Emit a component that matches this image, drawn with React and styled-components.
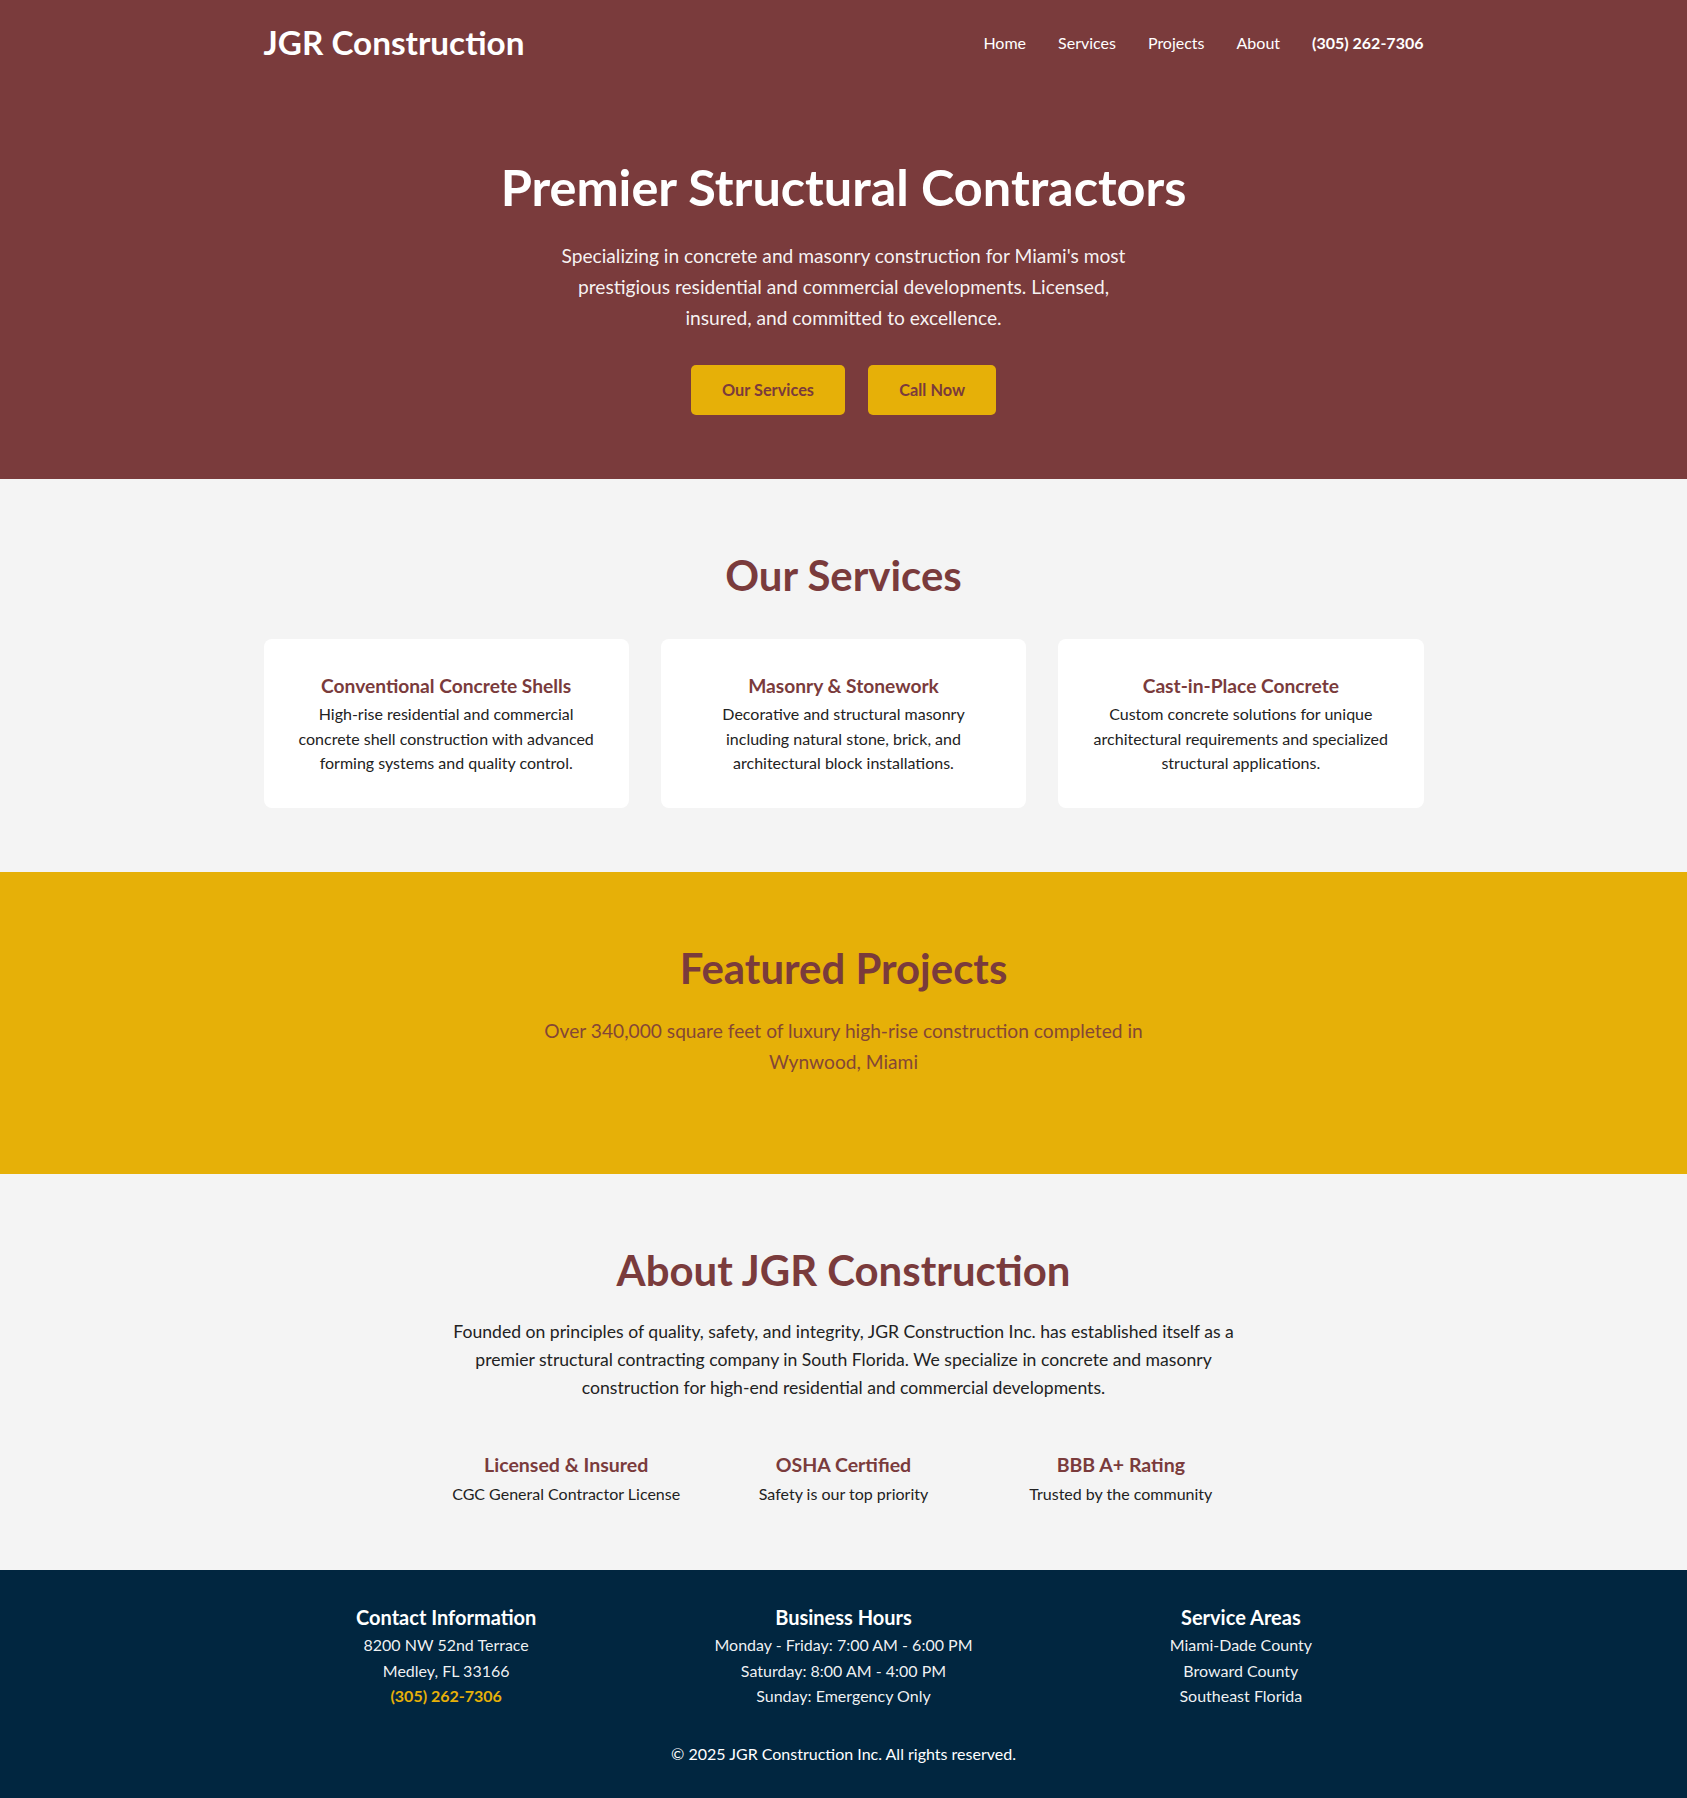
import React from 'react';
import styled, { createGlobalStyle } from 'styled-components';

const maroon = '#7a3b3c';
const gold = '#e6b008';
const navy = '#012640';

const GlobalStyle = createGlobalStyle`
  * { box-sizing: border-box; }
  body {
    margin: 0;
    font-family: "Segoe UI", Lato, "Open Sans", sans-serif;
    line-height: 1.6;
    color: #333;
    background: #f4f4f4;
  }
`;

const Container = styled.div`
  max-width: 1200px;
  margin: 0 auto;
  padding: 0 20px;
`;

const Header = styled.header`
  background: ${maroon};
  color: white;
  padding: 19px 0;
`;

const NavBar = styled(Container)`
  display: flex;
  justify-content: space-between;
  align-items: center;
`;

const Logo = styled.div`
  font-size: 2.08rem;
  line-height: 1.4;
  font-weight: 700;
`;

const NavLinks = styled.nav`
  display: flex;
  gap: 2rem;
  align-items: center;
`;

const NavLink = styled.a`
  color: white;
  text-decoration: none;
  font-size: 1rem;
  font-weight: ${p => (p.$bold ? 700 : 400)};
`;

const Hero = styled.section`
  background: ${maroon};
  color: white;
  text-align: center;
  padding: 4rem 0;
`;

const HeroTitle = styled.h1`
  font-size: 3.15rem;
  line-height: 1.52;
  font-weight: 700;
  margin: 0 0 1rem;
`;

const HeroText = styled.p`
  font-size: 1.2rem;
  max-width: 600px;
  margin: 0 auto 2rem;
  color: rgba(255, 255, 255, 0.95);
`;

const ButtonRow = styled.div`
  display: flex;
  justify-content: center;
  gap: 1.45rem;
`;

const Button = styled.a`
  display: inline-block;
  background: ${gold};
  color: ${maroon};
  font-weight: 700;
  font-size: 1.02rem;
  line-height: 1.2;
  padding: 15px 31px;
  border-radius: 5px;
  text-decoration: none;
`;

const Section = styled.section`
  background: ${p => p.$bg || '#f4f4f4'};
  padding: 4rem 0;
  text-align: center;
`;

const SectionTitle = styled.h2`
  font-size: 2.62rem;
  line-height: 1.53;
  font-weight: 700;
  color: ${maroon};
  margin: 0 0 ${p => p.$gap || '2rem'};
`;

const Grid = styled.div`
  display: grid;
  grid-template-columns: repeat(3, 1fr);
  gap: 2rem;
`;

const Card = styled.div`
  background: white;
  border-radius: 8px;
  padding: 2rem;
`;

const CardTitle = styled.h3`
  font-size: 1.2rem;
  color: ${maroon};
  margin: 0;
`;

const CardText = styled.p`
  margin: 0;
  line-height: 1.55;
  color: #222;
`;

const ProjectsText = styled.p`
  font-size: 1.2rem;
  max-width: 600px;
  margin: 0 auto 2rem;
  color: ${maroon};
  opacity: 0.9;
`;

const AboutText = styled.p`
  font-size: 1.1rem;
  max-width: 800px;
  margin: 0 auto 3rem;
  color: #222;
`;

const Features = styled(Grid)`
  max-width: 800px;
  margin: 0 auto;
`;

const FeatureTitle = styled.h3`
  font-size: 1.22rem;
  line-height: 1.55;
  color: ${maroon};
  margin: 0;
`;

const FeatureText = styled.p`
  margin: 0;
  font-size: 1rem;
  color: #222;
`;

const Footer = styled.footer`
  background: ${navy};
  color: white;
  text-align: center;
  padding: 2rem 0;
`;

const FooterTitle = styled.h4`
  font-size: 1.25rem;
  line-height: 1.5;
  margin: 0;
`;

const FooterLine = styled.p`
  margin: 0;
  font-size: 1rem;
  color: ${p => (p.$accent ? gold : 'rgba(255,255,255,0.95)')};
  font-weight: ${p => (p.$accent ? 700 : 400)};
`;

const Copyright = styled.p`
  margin: 2rem 0 0;
  font-size: 1rem;
`;

const services = [
  {
    title: 'Conventional Concrete Shells',
    text: 'High-rise residential and commercial concrete shell construction with advanced forming systems and quality control.',
  },
  {
    title: 'Masonry & Stonework',
    text: 'Decorative and structural masonry including natural stone, brick, and architectural block installations.',
  },
  {
    title: 'Cast-in-Place Concrete',
    text: 'Custom concrete solutions for unique architectural requirements and specialized structural applications.',
  },
];

const features = [
  { title: 'Licensed & Insured', text: 'CGC General Contractor License' },
  { title: 'OSHA Certified', text: 'Safety is our top priority' },
  { title: 'BBB A+ Rating', text: 'Trusted by the community' },
];

function App() {
  return (
    <>
      <GlobalStyle />
      <Header>
        <NavBar>
          <Logo>JGR Construction</Logo>
          <NavLinks>
            <NavLink href="#home">Home</NavLink>
            <NavLink href="#services">Services</NavLink>
            <NavLink href="#projects">Projects</NavLink>
            <NavLink href="#about">About</NavLink>
            <NavLink href="tel:3052627306" $bold>(305) 262-7306</NavLink>
          </NavLinks>
        </NavBar>
      </Header>

      <Hero id="home">
        <Container>
          <HeroTitle>Premier Structural Contractors</HeroTitle>
          <HeroText>
            Specializing in concrete and masonry construction for Miami's most prestigious residential and
            commercial developments. Licensed, insured, and committed to excellence.
          </HeroText>
          <ButtonRow>
            <Button href="#services">Our Services</Button>
            <Button href="tel:3052627306">Call Now</Button>
          </ButtonRow>
        </Container>
      </Hero>

      <Section id="services">
        <Container>
          <SectionTitle>Our Services</SectionTitle>
          <Grid>
            {services.map(s => (
              <Card key={s.title}>
                <CardTitle>{s.title}</CardTitle>
                <CardText>{s.text}</CardText>
              </Card>
            ))}
          </Grid>
        </Container>
      </Section>

      <Section id="projects" $bg={gold}>
        <Container>
          <SectionTitle $gap="1rem">Featured Projects</SectionTitle>
          <ProjectsText>
            Over 340,000 square feet of luxury high-rise construction completed in Wynwood, Miami
          </ProjectsText>
        </Container>
      </Section>

      <Section id="about">
        <Container>
          <SectionTitle $gap="1rem">About JGR Construction</SectionTitle>
          <AboutText>
            Founded on principles of quality, safety, and integrity, JGR Construction Inc. has established itself
            as a premier structural contracting company in South Florida. We specialize in concrete and masonry
            construction for high-end residential and commercial developments.
          </AboutText>
          <Features>
            {features.map(f => (
              <div key={f.title}>
                <FeatureTitle>{f.title}</FeatureTitle>
                <FeatureText>{f.text}</FeatureText>
              </div>
            ))}
          </Features>
        </Container>
      </Section>

      <Footer>
        <Container>
          <Grid>
            <div>
              <FooterTitle>Contact Information</FooterTitle>
              <FooterLine>8200 NW 52nd Terrace</FooterLine>
              <FooterLine>Medley, FL 33166</FooterLine>
              <FooterLine $accent>(305) 262-7306</FooterLine>
            </div>
            <div>
              <FooterTitle>Business Hours</FooterTitle>
              <FooterLine>Monday - Friday: 7:00 AM - 6:00 PM</FooterLine>
              <FooterLine>Saturday: 8:00 AM - 4:00 PM</FooterLine>
              <FooterLine>Sunday: Emergency Only</FooterLine>
            </div>
            <div>
              <FooterTitle>Service Areas</FooterTitle>
              <FooterLine>Miami-Dade County</FooterLine>
              <FooterLine>Broward County</FooterLine>
              <FooterLine>Southeast Florida</FooterLine>
            </div>
          </Grid>
          <Copyright>© 2025 JGR Construction Inc. All rights reserved.</Copyright>
        </Container>
      </Footer>
    </>
  );
}

export default App;
